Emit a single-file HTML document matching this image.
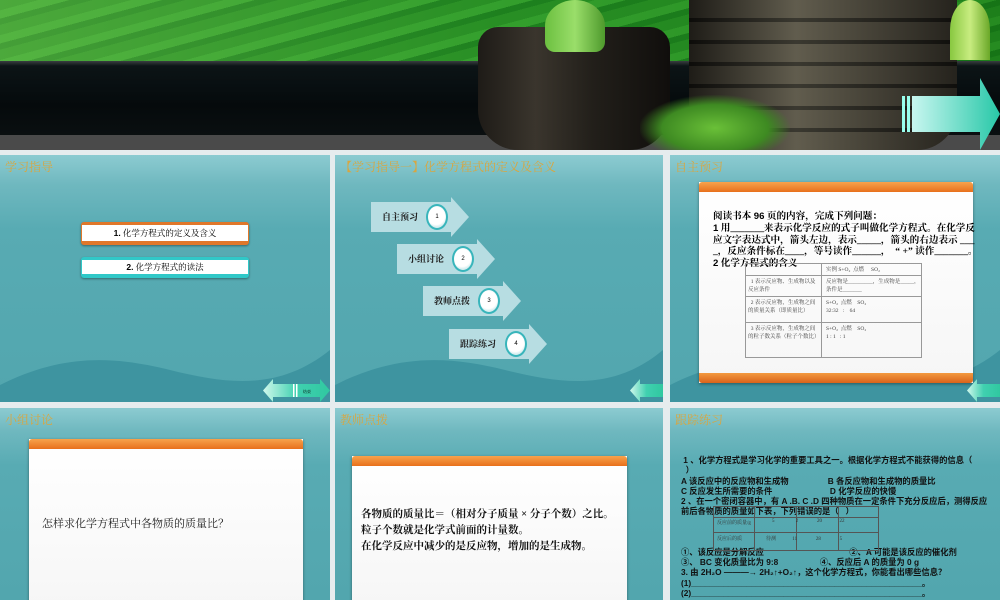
<!DOCTYPE html>
<html><head><meta charset="utf-8"><style>
*{margin:0;padding:0;box-sizing:border-box}
body{width:1000px;height:600px;overflow:hidden;background:#e6ecee;position:relative;font-family:"Liberation Serif","Noto Serif CJK SC",serif}
.abs{position:absolute}
.slide{position:absolute;overflow:hidden;background:linear-gradient(180deg,#8ccbd1 0%,#6fb8bf 12%,#58abb3 30%,#52a6ae 100%)}
.slide svg.bg{position:absolute;left:0;top:0}
.title{position:absolute;left:5px;top:3px;color:#d8a640;font-size:12px;white-space:nowrap}
.card{position:absolute;background:linear-gradient(180deg,#fff 0%,#f6f6f6 100%);box-shadow:0 1px 3px rgba(0,0,0,.4)}
.card .ot{position:absolute;left:0;right:0;top:0;height:10px;background:linear-gradient(180deg,#f7a34c,#e8701c);border-radius:3px 3px 0 0}
.card .ob{position:absolute;left:0;right:0;bottom:0;height:10px;background:linear-gradient(180deg,#f39a40,#d9631a);border-radius:0 0 3px 3px}
.sans{font-family:"Liberation Sans","Noto Sans CJK SC",sans-serif}
.step{position:absolute;height:30px;width:80px;background:#b7dde2}
.step:after{content:"";position:absolute;left:80px;top:-5px;border-left:18px solid #b7dde2;border-top:20px solid transparent;border-bottom:20px solid transparent}
.step span{position:absolute;left:0;width:58px;text-align:center;top:8px;font-size:9px;font-weight:bold;color:#222}
.circ{position:absolute;width:22px;height:26px;border-radius:50%;background:radial-gradient(circle at 45% 45%,#fff 55%,#d9eef0 70%);border:2px solid #38b5bb;font-size:6px;text-align:center;line-height:22px;z-index:2;font-family:"Liberation Sans",sans-serif}
.nw{white-space:nowrap}
</style></head><body>

<div class="abs" style="left:0;top:0;width:1000px;height:61px;background:repeating-linear-gradient(165deg,#2a9326 0 10px,#36a42f 10px 18px,#1f8420 18px 24px)"></div>
<div class="abs" style="left:0;top:0;width:1000px;height:61px;background:linear-gradient(90deg,rgba(140,210,100,.35),rgba(0,60,0,.05) 50%,rgba(0,80,0,.3))"></div>
<div class="abs" style="left:0;top:61px;width:1000px;height:74px;background:linear-gradient(180deg,#3a3f40 0,#0c1416 5px,#050a0c 60%,#0a0f10 100%)"></div>
<div class="abs" style="left:0;top:135px;width:1000px;height:15px;background:#4a4a4a"></div>
<div class="abs" style="left:478px;top:27px;width:192px;height:123px;background:linear-gradient(90deg,#1e1b17,#3a352d 30%,#221f1a 60%,#100e0c);border-radius:20px 20px 40px 40px"></div>
<div class="abs" style="left:545px;top:0;width:60px;height:52px;background:linear-gradient(90deg,#6cc040,#9ade6a,#4e9a2c);border-radius:50% 50% 10px 10px"></div>
<div class="abs" style="left:689px;top:0;width:268px;height:150px;background:repeating-linear-gradient(180deg,#4b463a 0 18px,#1f1d18 18px 22px);border-radius:0 0 40px 40px"></div>
<div class="abs" style="left:689px;top:0;width:268px;height:150px;background:linear-gradient(90deg,rgba(0,0,0,.6),rgba(255,255,220,.12) 40%,rgba(0,0,0,.5));border-radius:0 0 40px 40px"></div>
<div class="abs" style="left:640px;top:95px;width:150px;height:55px;background:radial-gradient(ellipse at 50% 60%,#6ac038 0,#3e8a22 50%,transparent 72%)"></div>
<div class="abs" style="left:950px;top:0;width:40px;height:60px;background:linear-gradient(90deg,#88c840,#c8ec80,#6aa828);border-radius:50% 50% 0 0"></div>
<svg class="abs" style="left:902px;top:78px" width="98" height="72"><defs><linearGradient id="ga" x1="0" x2="1"><stop offset="0" stop-color="#c8f6f0"/><stop offset="1" stop-color="#28c8a8"/></linearGradient></defs><rect x="0" y="18" width="3" height="36" fill="#9fe"/><rect x="5" y="18" width="3" height="36" fill="#9fe"/><path d="M10 18H78V0L98 36L78 72V54H10Z" fill="url(#ga)"/></svg>

<div class="slide" style="left:0;top:155px;width:330px;height:247px">
<svg class="bg" width="330" height="247"><path d="M0 230C60 200 110 200 170 215C230 230 280 235 330 195V247H0Z" fill="#3e94a0"/></svg>
<div class="title">学习指导</div>
<div class="abs" style="left:81px;top:67px;width:168px;height:23px;background:#e0772a;border-radius:3px;box-shadow:0 1px 2px rgba(0,0,0,.4)"><div style="position:absolute;left:1px;right:1px;top:3px;bottom:4px;background:#fff;font-size:8.5px;text-align:center;line-height:16px"><b class="sans">1.</b> 化学方程式的定义及含义</div></div>
<div class="abs" style="left:81px;top:102px;width:168px;height:21px;background:#30c8c8;border-radius:3px;box-shadow:0 1px 2px rgba(0,0,0,.4)"><div style="position:absolute;left:1px;right:1px;top:3px;bottom:4px;background:#fff;font-size:8.5px;text-align:center;line-height:14px"><b class="sans">2.</b> 化学方程式的读法</div></div>
<svg class="abs" style="left:263px;top:224px" width="67" height="23"><defs><linearGradient id="gb" x1="0" x2="1"><stop offset="0" stop-color="#d0f8ec"/><stop offset=".5" stop-color="#40d0b0"/><stop offset="1" stop-color="#30c8a0"/></linearGradient></defs><path d="M0 11.5L10 0V5H57V0L67 11.5L57 23V18H10V23Z" fill="url(#gb)"/><rect x="30" y="5" width="1.5" height="13" fill="#fff"/><rect x="33" y="5" width="1.5" height="13" fill="#fff"/><text x="40" y="14" font-size="4">结束</text></svg>
</div>

<div class="slide" style="left:335px;top:155px;width:328px;height:247px">
<svg class="bg" width="328" height="247"><path d="M0 230C60 200 110 200 170 215C230 230 280 235 328 195V247H0Z" fill="#3e94a0"/></svg>
<div class="title">【学习指导一】化学方程式的定义及含义</div>
<div class="step" style="left:36px;top:47px"><span>自主预习</span></div><div class="circ" style="left:91px;top:49px">1</div>
<div class="step" style="left:62px;top:89px"><span>小组讨论</span></div><div class="circ" style="left:117px;top:91px">2</div>
<div class="step" style="left:88px;top:131px"><span>教师点拨</span></div><div class="circ" style="left:143px;top:133px">3</div>
<div class="step" style="left:114px;top:174px"><span>跟踪练习</span></div><div class="circ" style="left:170px;top:176px">4</div>
<svg class="abs" style="left:295px;top:224px" width="33" height="23"><path d="M0 11.5L10 0V5H33V18H10V23Z" fill="url(#gb)"/></svg>
</div>

<div class="slide" style="left:670px;top:155px;width:330px;height:247px">
<svg class="bg" width="330" height="247"><path d="M0 230C60 200 110 200 170 215C230 230 280 235 330 195V247H0Z" fill="#3e94a0"/></svg>
<div class="title">自主预习</div>
<div class="card" style="left:29px;top:27px;width:274px;height:201px"><div class="ot"></div><div class="ob"></div>
<div class="abs nw" style="left:14px;top:29px;font-size:9.6px;line-height:11.8px;font-weight:bold">阅读书本 <span class="sans">96</span> 页的内容，完成下列问题：<br><span class="sans">1</span> 用_______来表示化学反应的式子叫做化学方程式。在化学反<br>应文字表达式中，箭头左边，表示_____，箭头的右边表示 ___<br>_，反应条件标在____，等号读作______，&nbsp; “ +” 读作_______。<br><span class="sans">2</span> 化学方程式的含义</div>
<div class="abs" style="left:46px;top:81px;width:177px;height:95px;border:1px solid #999;font-size:5.5px;color:#444;line-height:8px">
<div class="abs" style="left:75px;top:0;bottom:0;border-left:1px solid #999"></div>
<div class="abs" style="left:0;right:0;top:11px;border-top:1px solid #999"></div>
<div class="abs" style="left:0;right:0;top:32px;border-top:1px solid #999"></div>
<div class="abs" style="left:0;right:0;top:58px;border-top:1px solid #999"></div>
<div class="abs" style="left:80px;top:2px">实例 S+O₂ &nbsp;点燃&nbsp;&nbsp;&nbsp;&nbsp; SO₂</div>
<div class="abs" style="left:2px;top:14px;width:72px">&nbsp;&nbsp;1 表示反应物、生成物以及反应条件</div><div class="abs" style="left:80px;top:14px;width:95px">反应物是_________，生成物是_____，条件是_______</div>
<div class="abs" style="left:2px;top:35px;width:72px">&nbsp;&nbsp;2 表示反应物，生成物之间的质量关系（即质量比）</div><div class="abs" style="left:80px;top:35px">S+O₂ &nbsp;点燃&nbsp;&nbsp;&nbsp; SO₂<br>32:32 &nbsp;&nbsp;: &nbsp;&nbsp;&nbsp;64</div>
<div class="abs" style="left:2px;top:61px;width:72px">&nbsp;&nbsp;3 表示反应物，生成物之间的粒子数关系（粒子个数比）</div><div class="abs" style="left:80px;top:61px">S+O₂ &nbsp;点燃&nbsp;&nbsp;&nbsp; SO₂<br>1 : 1 &nbsp;&nbsp;: 1</div>
</div></div>
<svg class="abs" style="left:297px;top:224px" width="33" height="23"><path d="M0 11.5L10 0V5H33V18H10V23Z" fill="url(#gb)"/></svg>
</div>

<div class="slide" style="left:0;top:408px;width:330px;height:192px">
<div class="title">小组讨论</div>
<div class="card" style="left:29px;top:31px;width:274px;height:170px"><div class="ot"></div>
<div class="abs" style="left:13px;top:76px;font-size:11px;color:#222">怎样求化学方程式中各物质的质量比？</div></div>
</div>

<div class="slide" style="left:335px;top:408px;width:328px;height:192px">
<div class="title">教师点拨</div>
<div class="card" style="left:17px;top:48px;width:275px;height:150px"><div class="ot"></div>
<div class="abs" style="left:9px;top:51px;font-size:10.5px;line-height:16px;font-weight:bold;color:#111;white-space:nowrap">各物质的质量比＝（相对分子质量 × 分子个数）之比。<br>粒子个数就是化学式前面的计量数。<br>在化学反应中减少的是反应物，增加的是生成物。</div></div>
</div>

<div class="slide" style="left:670px;top:408px;width:330px;height:192px">
<div class="title">跟踪练习</div>
<div class="abs nw sans" style="left:11px;top:47px;font-size:8.3px;line-height:10.3px;font-weight:bold;color:#111">
&nbsp;1 、化学方程式是学习化学的重要工具之一。根据化学方程式不能获得的信息（<br>&nbsp;&nbsp;）<br>
A 该反应中的反应物和生成物&nbsp;&nbsp;&nbsp;&nbsp;&nbsp;&nbsp;&nbsp;&nbsp;&nbsp;&nbsp;&nbsp;&nbsp;&nbsp;&nbsp;&nbsp;&nbsp;&nbsp;B 各反应物和生成物的质量比<br>
C 反应发生所需要的条件&nbsp;&nbsp;&nbsp;&nbsp;&nbsp;&nbsp;&nbsp;&nbsp;&nbsp;&nbsp;&nbsp;&nbsp;&nbsp;&nbsp;&nbsp;&nbsp;&nbsp;&nbsp;&nbsp;&nbsp;&nbsp;&nbsp;&nbsp;&nbsp;&nbsp;D 化学反应的快慢<br>
2 、在一个密闭容器中，有 A .B. C .D 四种物质在一定条件下充分反应后，测得反应<br>前后各物质的质量如下表，下列错误的是（&nbsp;&nbsp;&nbsp;）<br>
<div style="height:30px"></div>
①、该反应是分解反应&nbsp;&nbsp;&nbsp;&nbsp;&nbsp;&nbsp;&nbsp;&nbsp;&nbsp;&nbsp;&nbsp;&nbsp;&nbsp;&nbsp;&nbsp;&nbsp;&nbsp;&nbsp;&nbsp;&nbsp;&nbsp;&nbsp;&nbsp;&nbsp;&nbsp;&nbsp;&nbsp;&nbsp;&nbsp;&nbsp;&nbsp;&nbsp;&nbsp;&nbsp;&nbsp;&nbsp;&nbsp;②、A 可能是该反应的催化剂<br>
③、 BC 变化质量比为 9:8&nbsp;&nbsp;&nbsp;&nbsp;&nbsp;&nbsp;&nbsp;&nbsp;&nbsp;&nbsp;&nbsp;&nbsp;&nbsp;&nbsp;&nbsp;&nbsp;&nbsp;&nbsp;④、反应后 A 的质量为 0 g<br>
3. 由 2H₂O ———→ 2H₂↑+O₂↑，这个化学方程式，你能看出哪些信息？<br>
(1)__________________________________________________。<br>
(2)__________________________________________________。<br>(3)</div>
<div class="abs" style="left:43px;top:98px;width:166px;height:45px;border:1px solid #555;font-size:5px;color:#333">
<div class="abs" style="left:0;right:0;top:10px;border-top:1px solid #555"></div>
<div class="abs" style="left:0;right:0;top:25px;border-top:1px solid #555"></div>
<div class="abs" style="left:40px;top:0;bottom:0;border-left:1px solid #555"></div>
<div class="abs" style="left:82px;top:0;bottom:0;border-left:1px solid #555"></div>
<div class="abs" style="left:124px;top:0;bottom:0;border-left:1px solid #555"></div>
<div class="abs" style="left:3px;top:12px">反应前的质量/g</div><div class="abs nw" style="left:58px;top:12px">5&nbsp;&nbsp;&nbsp;&nbsp;&nbsp;&nbsp;&nbsp;&nbsp;&nbsp;&nbsp;&nbsp;&nbsp;&nbsp;&nbsp;&nbsp;&nbsp;&nbsp;2&nbsp;&nbsp;&nbsp;&nbsp;&nbsp;&nbsp;&nbsp;&nbsp;&nbsp;&nbsp;&nbsp;&nbsp;&nbsp;&nbsp;&nbsp;20&nbsp;&nbsp;&nbsp;&nbsp;&nbsp;&nbsp;&nbsp;&nbsp;&nbsp;&nbsp;&nbsp;&nbsp;&nbsp;&nbsp;22</div>
<div class="abs" style="left:3px;top:28px">反应后的质</div><div class="abs nw" style="left:52px;top:28px">待测&nbsp;&nbsp;&nbsp;&nbsp;&nbsp;&nbsp;&nbsp;&nbsp;&nbsp;&nbsp;&nbsp;&nbsp;&nbsp;11&nbsp;&nbsp;&nbsp;&nbsp;&nbsp;&nbsp;&nbsp;&nbsp;&nbsp;&nbsp;&nbsp;&nbsp;&nbsp;&nbsp;&nbsp;28&nbsp;&nbsp;&nbsp;&nbsp;&nbsp;&nbsp;&nbsp;&nbsp;&nbsp;&nbsp;&nbsp;&nbsp;&nbsp;&nbsp;&nbsp;5</div>
</div>
</div>
</body></html>
